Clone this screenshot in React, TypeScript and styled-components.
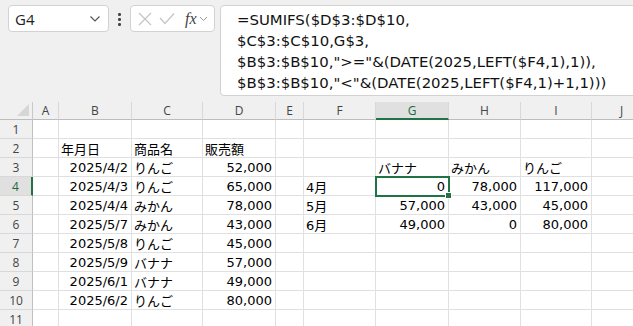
import React from "react";
import styled, { createGlobalStyle } from "styled-components";

const GlobalStyle = createGlobalStyle`
  html, body {
    margin: 0;
    padding: 0;
    background: #ffffff;
    overflow: hidden;
  }
  body {
    font-family: "DejaVu Sans", "Noto Sans CJK JP", sans-serif;
  }
`;

const COLS = ["A", "B", "C", "D", "E", "F", "G", "H", "I", "J"];

type Align = "left" | "right";
type CellData = { text: string; align?: Align };

// 行ごとのセル（列A〜Jの順）
const rows: (CellData | null)[][] = [
  [],
  [null, { text: "年月日" }, { text: "商品名" }, { text: "販売額" }],
  [
    null,
    { text: "2025/4/2", align: "right" },
    { text: "りんご" },
    { text: "52,000", align: "right" },
    null,
    null,
    { text: "バナナ" },
    { text: "みかん" },
    { text: "りんご" },
  ],
  [
    null,
    { text: "2025/4/3", align: "right" },
    { text: "りんご" },
    { text: "65,000", align: "right" },
    null,
    { text: "4月" },
    { text: "0", align: "right" },
    { text: "78,000", align: "right" },
    { text: "117,000", align: "right" },
  ],
  [
    null,
    { text: "2025/4/4", align: "right" },
    { text: "みかん" },
    { text: "78,000", align: "right" },
    null,
    { text: "5月" },
    { text: "57,000", align: "right" },
    { text: "43,000", align: "right" },
    { text: "45,000", align: "right" },
  ],
  [
    null,
    { text: "2025/5/7", align: "right" },
    { text: "みかん" },
    { text: "43,000", align: "right" },
    null,
    { text: "6月" },
    { text: "49,000", align: "right" },
    { text: "0", align: "right" },
    { text: "80,000", align: "right" },
  ],
  [null, { text: "2025/5/8", align: "right" }, { text: "りんご" }, { text: "45,000", align: "right" }],
  [null, { text: "2025/5/9", align: "right" }, { text: "バナナ" }, { text: "57,000", align: "right" }],
  [null, { text: "2025/6/1", align: "right" }, { text: "バナナ" }, { text: "49,000", align: "right" }],
  [null, { text: "2025/6/2", align: "right" }, { text: "りんご" }, { text: "80,000", align: "right" }],
  [],
];

const SEL_ROW = 4;
const SEL_COL = "G";

const formula = [
  "=SUMIFS($D$3:$D$10,",
  "$C$3:$C$10,G$3,",
  '$B$3:$B$10,">="&(DATE(2025,LEFT($F4,1),1)),',
  '$B$3:$B$10,"<"&(DATE(2025,LEFT($F4,1)+1,1)))',
];

const App = () => {
  return (
    <>
      <GlobalStyle />
      <Page>
        <Toolbar>
          <NameBox>
            <NameText>G4</NameText>
            <svg width="12" height="8" viewBox="0 0 12 8">
              <path d="M1.5 1.5 L6 6 L10.5 1.5" fill="none" stroke="#555" strokeWidth="1.2" />
            </svg>
          </NameBox>
          <Dots>
            <Dot />
            <Dot />
            <Dot />
          </Dots>
          <FxBox>
            <svg width="14" height="14" viewBox="0 0 14 14">
              <path d="M1 1 L13 13 M13 1 L1 13" stroke="#c4c4c4" strokeWidth="1.2" />
            </svg>
            <svg width="16" height="14" viewBox="0 0 16 14">
              <path d="M1 6 L6 11.5 L15 1.5" fill="none" stroke="#c4c4c4" strokeWidth="1.2" />
            </svg>
            <FxLabel>fx</FxLabel>
            <svg width="9" height="6" viewBox="0 0 9 6">
              <path d="M1 1 L4.5 4.5 L8 1" fill="none" stroke="#9a9a9a" strokeWidth="1" />
            </svg>
          </FxBox>
          <FormulaBar>
            {formula.map((line, i) => (
              <FormulaLine key={i}>{line}</FormulaLine>
            ))}
          </FormulaBar>
        </Toolbar>

        <Sheet>
          <Corner>
            <svg width="12" height="12" viewBox="0 0 12 12">
              <path d="M12 0 L12 12 L0 12 Z" fill="#d6d6d6" />
            </svg>
          </Corner>
          {COLS.map((c) => (
            <ColHeader key={c} $selected={c === SEL_COL}>
              {c}
            </ColHeader>
          ))}
          {rows.map((row, ri) => {
            const rowNo = ri + 1;
            return (
              <React.Fragment key={rowNo}>
                <RowHeader $selected={rowNo === SEL_ROW}>{rowNo}</RowHeader>
                {COLS.map((c, ci) => {
                  const cell = row[ci];
                  const selected = rowNo === SEL_ROW && c === SEL_COL;
                  return (
                    <Cell key={c} $align={cell?.align ?? "left"} $selected={selected}>
                      {cell?.text}
                      {selected && <FillHandle />}
                    </Cell>
                  );
                })}
              </React.Fragment>
            );
          })}
        </Sheet>
      </Page>
    </>
  );
};

export default App;

const Page = styled.div`
  width: 633px;
  height: 326px;
  overflow: hidden;
  background: #ffffff;
`;

const Toolbar = styled.div`
  display: flex;
  align-items: flex-start;
  height: 102px;
  box-sizing: border-box;
  padding: 5px 0 0 8px;
  background: #f0f0f0;
`;

const NameBox = styled.div`
  display: flex;
  align-items: center;
  justify-content: space-between;
  width: 101px;
  height: 27px;
  box-sizing: border-box;
  padding: 0 7px 0 6px;
  background: #ffffff;
  border: 1px solid #d2d2d2;
  border-radius: 4px;
`;

const NameText = styled.span`
  font-family: "Open Sans", "Liberation Sans", sans-serif;
  font-size: 15px;
  color: #222;
`;

const Dots = styled.div`
  display: flex;
  flex-direction: column;
  align-items: center;
  gap: 2.5px;
  width: 21px;
  padding-top: 8px;
`;

const Dot = styled.span`
  width: 2.5px;
  height: 2.5px;
  border-radius: 50%;
  background: #444;
`;

const FxBox = styled.div`
  display: flex;
  align-items: center;
  gap: 7px;
  width: 85px;
  height: 27px;
  box-sizing: border-box;
  padding: 0 0 0 7px;
  background: #ffffff;
  border: 1px solid #d2d2d2;
  border-radius: 4px;
`;

const FxLabel = styled.span`
  font-family: "Liberation Serif", "DejaVu Serif", serif;
  font-style: italic;
  font-size: 16px;
  color: #444;
  margin-left: 3px;
  margin-right: -5px;
`;

const FormulaBar = styled.div`
  flex: 1;
  height: 91px;
  margin-left: 5px;
  margin-right: -10px;
  box-sizing: border-box;
  padding: 4px 0 0 16px;
  background: #ffffff;
  border: 1px solid #d2d2d2;
  border-radius: 4px;
`;

const FormulaLine = styled.div`
  font-family: "DejaVu Sans", sans-serif;
  font-size: 14.9px;
  line-height: 21px;
  color: #111;
  white-space: nowrap;
`;

const Sheet = styled.div`
  display: grid;
  grid-template-columns: 33px 26px 73px 71px 73px 28px 72px 73px 72px 71px 60px;
  grid-template-rows: 18px repeat(11, 19px);
  background: #ffffff;
`;

const Corner = styled.div`
  display: flex;
  align-items: flex-end;
  justify-content: flex-end;
  padding: 0 3px 3px 0;
  background: #f0f0f0;
  border-right: 1px solid #c8c8c8;
  border-bottom: 1px solid #bdbdbd;
`;

const ColHeader = styled.div<{ $selected?: boolean }>`
  display: flex;
  align-items: center;
  justify-content: center;
  font-family: "Open Sans", "Liberation Sans", sans-serif;
  font-size: 12px;
  color: ${(p) => (p.$selected ? "#1b6a3f" : "#444")};
  background: ${(p) => (p.$selected ? "#e0e0e0" : "#f0f0f0")};
  border-right: 1px solid #d8d8d8;
  border-bottom: ${(p) => (p.$selected ? "2px solid #217346" : "1px solid #bdbdbd")};
`;

const RowHeader = styled.div<{ $selected?: boolean }>`
  display: flex;
  align-items: center;
  justify-content: center;
  font-family: "Open Sans", "Liberation Sans", sans-serif;
  font-size: 12px;
  color: ${(p) => (p.$selected ? "#1b6a3f" : "#444")};
  background: ${(p) => (p.$selected ? "#e0e0e0" : "#f0f0f0")};
  border-bottom: 1px solid #d8d8d8;
  border-right: ${(p) => (p.$selected ? "2px solid #217346" : "1px solid #c0c0c0")};
`;

const Cell = styled.div<{ $align: Align; $selected?: boolean }>`
  position: relative;
  display: flex;
  align-items: center;
  justify-content: ${(p) => (p.$align === "right" ? "flex-end" : "flex-start")};
  padding: 1px 3px 0 2px;
  font-family: "DejaVu Sans", "Noto Sans CJK JP", sans-serif;
  font-size: 13px;
  color: #000;
  white-space: nowrap;
  border-right: 1px solid #e0e0e0;
  border-bottom: 1px solid #e0e0e0;
  outline: ${(p) => (p.$selected ? "2px solid #217346" : "none")};
  outline-offset: -1px;
  z-index: ${(p) => (p.$selected ? 1 : 0)};
`;

const FillHandle = styled.span`
  position: absolute;
  right: -4px;
  bottom: -4px;
  width: 5px;
  height: 5px;
  background: #217346;
  border: 1px solid #ffffff;
`;
